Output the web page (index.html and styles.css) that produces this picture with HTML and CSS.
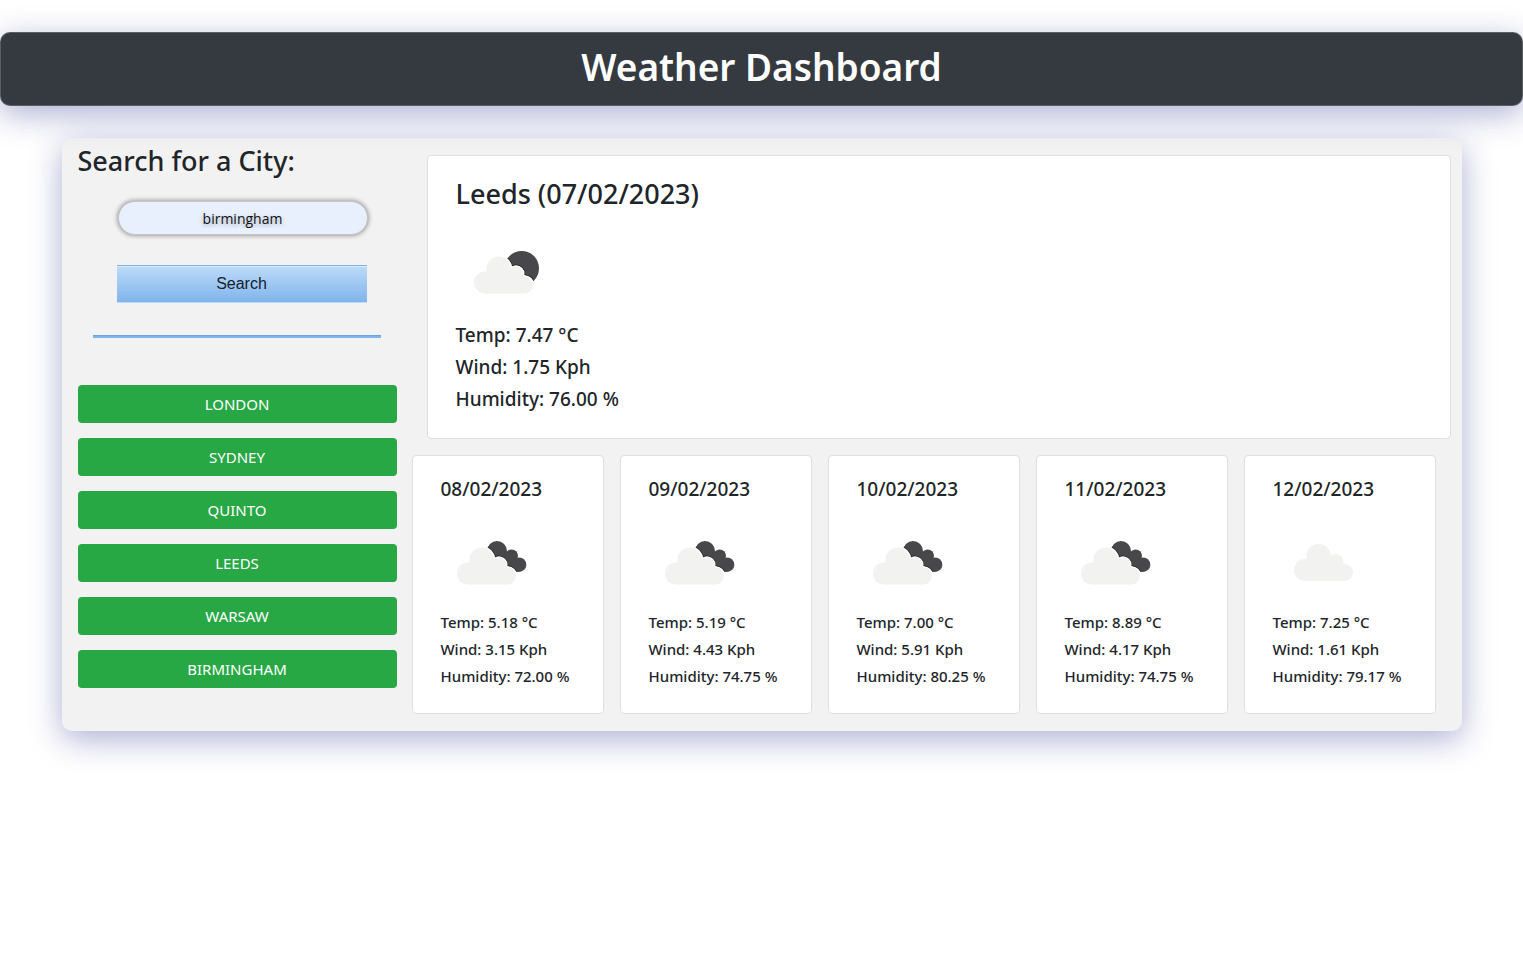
FILE: index.html
```html
<!DOCTYPE html>
<html lang="en">
<head>
<meta charset="utf-8">
<meta name="viewport" content="width=device-width, initial-scale=1">
<title>Weather Dashboard</title>
<link rel="stylesheet" href="styles.css">
</head>
<body>
<svg class="sprite" aria-hidden="true">
  <defs>
    <g id="cloud">
      <circle cx="32" cy="57" r="11"/>
      <circle cx="45.7" cy="43.3" r="12.3"/>
      <circle cx="63" cy="48.3" r="7.3"/>
      <circle cx="71.5" cy="59.5" r="8.5"/>
      <path d="M32 68V46l14-3 17 5 8.5 3v17z"/>
    </g>
    <g id="back-cloud">
      <circle cx="56" cy="38" r="10"/>
      <circle cx="70.7" cy="42.7" r="6.3"/>
      <circle cx="78" cy="51.7" r="7.3"/>
      <path d="M56 38l14.700 2 4 6 3 13-14-2z"/>
    </g>
    <clipPath id="clip-back">
      <circle cx="56" cy="38" r="10"/>
      <circle cx="70.7" cy="42.7" r="6.3"/>
      <circle cx="78" cy="51.7" r="7.3"/>
      <path d="M56 38l14.700 2 4 6 3 13-14-2z"/>
    </clipPath>
    <clipPath id="clip-moon"><circle cx="65.7" cy="46.3" r="17.3"/></clipPath>
    <symbol id="scattered" viewBox="0 0 100 100">
      <use href="#cloud" fill="#f2f2f0"/>
    </symbol>
    <symbol id="broken" viewBox="0 0 100 100">
      <use href="#back-cloud" fill="#48484a"/>
      <g clip-path="url(#clip-back)"><use href="#cloud" x="-5" y="3.500" fill="#222" stroke="#222" stroke-width="4"/></g>
      <use href="#cloud" x="-5" y="3.500" fill="#fff" stroke="#fff" stroke-width="2.500"/>
      <use href="#cloud" x="-5" y="3.500" fill="#f2f2f0"/>
    </symbol>
    <symbol id="few" viewBox="0 0 100 100">
      <circle cx="65.7" cy="46.3" r="17.3" fill="#48484a"/>
      <g clip-path="url(#clip-moon)"><use href="#cloud" x="-3" y="3.500" fill="#222" stroke="#222" stroke-width="4"/></g>
      <use href="#cloud" x="-3" y="3.500" fill="#fff" stroke="#fff" stroke-width="2.500"/>
      <use href="#cloud" x="-3" y="3.500" fill="#f2f2f0"/>
    </symbol>
  </defs>
</svg>

<header class="banner"><h1 class="banner-title">Weather Dashboard</h1></header>

<main class="dashboard">
  <aside class="sidebar">
    <form class="search" onsubmit="return false">
      <label class="search-label" for="city">Search for a City:</label>
      <input class="search-input" id="city" type="text" value="birmingham">
      <button class="search-button" type="submit">Search</button>
    </form>
    <hr class="divider">
    <div class="history">
      <button class="city-button" type="button">LONDON</button>
      <button class="city-button" type="button">SYDNEY</button>
      <button class="city-button" type="button">QUINTO</button>
      <button class="city-button" type="button">LEEDS</button>
      <button class="city-button" type="button">WARSAW</button>
      <button class="city-button" type="button">BIRMINGHAM</button>
    </div>
  </aside>

  <div class="results">
    <section class="card today">
      <h2 class="today-title">Leeds (07/02/2023)</h2>
      <svg class="icon" role="img" aria-label="Few clouds"><use href="#few"/></svg>
      <p class="reading">Temp: 7.47 °C</p>
      <p class="reading">Wind: 1.75 Kph</p>
      <p class="reading">Humidity: 76.00 %</p>
    </section>
    <section class="forecast" aria-label="Forecast">
      <article class="card day">
        <h3 class="day-title">08/02/2023</h3>
        <svg class="icon" role="img" aria-label="Broken clouds"><use href="#broken"/></svg>
        <p class="reading">Temp: 5.18 °C</p>
        <p class="reading">Wind: 3.15 Kph</p>
        <p class="reading">Humidity: 72.00 %</p>
      </article>
      <article class="card day">
        <h3 class="day-title">09/02/2023</h3>
        <svg class="icon" role="img" aria-label="Broken clouds"><use href="#broken"/></svg>
        <p class="reading">Temp: 5.19 °C</p>
        <p class="reading">Wind: 4.43 Kph</p>
        <p class="reading">Humidity: 74.75 %</p>
      </article>
      <article class="card day">
        <h3 class="day-title">10/02/2023</h3>
        <svg class="icon" role="img" aria-label="Broken clouds"><use href="#broken"/></svg>
        <p class="reading">Temp: 7.00 °C</p>
        <p class="reading">Wind: 5.91 Kph</p>
        <p class="reading">Humidity: 80.25 %</p>
      </article>
      <article class="card day">
        <h3 class="day-title">11/02/2023</h3>
        <svg class="icon" role="img" aria-label="Broken clouds"><use href="#broken"/></svg>
        <p class="reading">Temp: 8.89 °C</p>
        <p class="reading">Wind: 4.17 Kph</p>
        <p class="reading">Humidity: 74.75 %</p>
      </article>
      <article class="card day">
        <h3 class="day-title">12/02/2023</h3>
        <svg class="icon" role="img" aria-label="Scattered clouds"><use href="#scattered"/></svg>
        <p class="reading">Temp: 7.25 °C</p>
        <p class="reading">Wind: 1.61 Kph</p>
        <p class="reading">Humidity: 79.17 %</p>
      </article>
    </section>
  </div>
</main>
</body>
</html>
```

FILE: styles.css
```css
* { box-sizing: border-box; }

body {
  display: flow-root;
  min-height: 100vh;
  margin: 0;
  background: #fff;
  color: #212529;
  font-family: "Segoe UI", "Noto Sans", "Open Sans", sans-serif;
  font-size: 15px;
}

h1, h2, h3, p { margin: 0; }

.sprite { position: absolute; width: 0; height: 0; }

.banner {
  margin: 32px 0;
  padding: 10px 16px 14px;
  text-align: center;
  color: #fff;
  background: #343a40;
  border: 1px solid rgba(255, 255, 255, 0.18);
  border-radius: 10px;
  box-shadow: 0 8px 32px rgba(31, 38, 135, 0.37);
}

.banner-title {
  font-size: 37px;
  font-weight: 600;
  line-height: 48px;
}

.dashboard {
  display: flex;
  max-width: 1400px;
  margin: 0 auto;
  background: rgba(0, 0, 0, 0.05);
  border-radius: 10px;
  box-shadow: 0 8px 32px rgba(31, 38, 135, 0.37);
}

.sidebar {
  flex: 0 0 25%;
  padding: 6px 15px 0 16px;
}

.search {
  display: flex;
  flex-direction: column;
  align-items: center;
}

.search-label {
  align-self: flex-start;
  font-size: 27px;
  font-weight: 500;
  line-height: 34px;
}

.search-input {
  width: 250px;
  height: 34px;
  margin: 23px 0 30px 11px;
  padding: 0 16px;
  text-align: center;
  font: 14px "Segoe UI", "Open Sans", sans-serif;
  color: #111;
  text-shadow: 0 2px 5px rgba(0, 0, 0, 0.3);
  background: #e8f0fe;
  border: 1px solid #c4c4c4;
  border-radius: 17px;
  box-shadow: 0 0 4px 1px rgba(0, 0, 0, 0.35);
}

.search-button {
  width: 250px;
  height: 38px;
  margin-left: 9px;
  font: 16px "Liberation Sans", Arial, sans-serif;
  color: #14212e;
  background: linear-gradient(#bddbfa, #80b4ea);
  border: 0;
  border-top: 1px solid #7eb1e4;
  border-bottom: 1px solid #b9dcff;
  box-shadow: inset 0 1px 0 #d9eafc;
}

.divider {
  height: 3px;
  margin: 32px 16px 47px 15px;
  background: #7eb4ea;
  border: 0;
  border-top: 1px solid #6aa5de;
}

.history {
  display: grid;
  gap: 15px;
}

.city-button {
  height: 38px;
  padding-bottom: 2px;
  font: 15px "Segoe UI", "Noto Sans", sans-serif;
  color: #fff;
  background: #28a745;
  border: 0;
  border-radius: 4px;
}

.results {
  flex: 1;
  min-width: 0;
  padding: 17px 11px 17px 0;
}

.card {
  background: #fff;
  border: 1px solid #dfdfdf;
  border-radius: 4px;
}

.icon {
  display: block;
  width: 100px;
  height: 100px;
}

.today {
  margin-left: 15px;
  padding: 19px 28px 23px;
  font-size: 19px;
  font-weight: 500;
  line-height: 32px;
}

.today-title {
  margin-bottom: 9px;
  font-size: 27px;
  font-weight: 500;
  line-height: 38px;
}

.today .icon { margin-bottom: -3px; }

.forecast {
  display: grid;
  grid-template-columns: repeat(5, 1fr);
  gap: 16px;
  margin: 16px 15px 0 0;
}

.day {
  padding: 20px 0 23px 28px;
  font-weight: 500;
  line-height: 27px;
  white-space: nowrap;
}

.day-title {
  margin-bottom: 10px;
  font-size: 19px;
  font-weight: 500;
  line-height: 27px;
}

.day .icon { margin-bottom: -4px; }
```
